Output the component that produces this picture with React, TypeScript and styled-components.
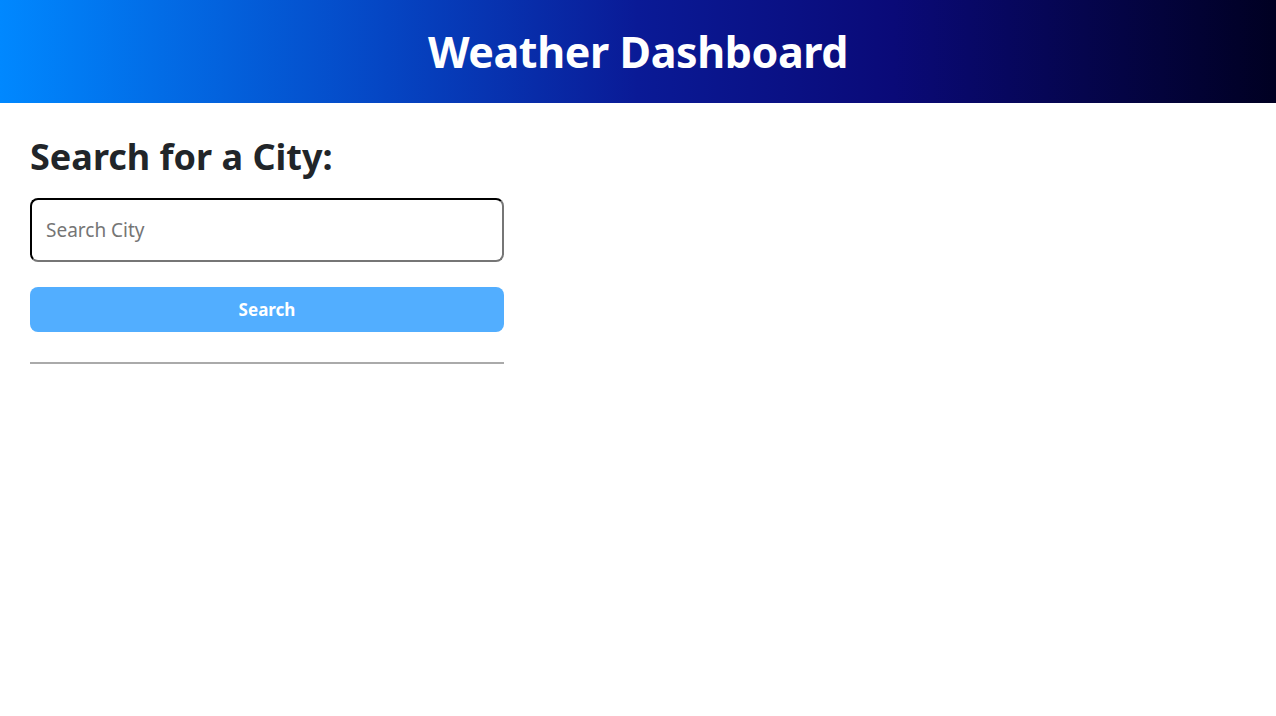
import React from "react";
import styled, { createGlobalStyle } from "styled-components";

const Global = createGlobalStyle`
  html, body { margin: 0; padding: 0; background: #fff; }
  body { font-family: "Noto Sans", "Open Sans", "DejaVu Sans", sans-serif; color: #212529; }
  * { box-sizing: border-box; }
`;

const Header = styled.header`
  height: 103px;
  display: flex;
  align-items: center;
  justify-content: center;
  background: linear-gradient(to right, #0088ff 0%, #0546c4 30%, #0a1a96 50%, #0a0a78 70%, #000022 100%);
`;

const Title = styled.h1`
  margin: 0;
  color: #fff;
  font-size: 43px;
  font-weight: 700;
  letter-spacing: -0.4px;
`;

const Main = styled.main`
  padding: 32px 30px 30px;
`;

const Sidebar = styled.section`
  width: 474px;
  display: flex;
  flex-direction: column;
`;

const Heading = styled.h2`
  margin: 0 0 20px;
  font-size: 36px;
  font-weight: 700;
  line-height: 1.2;
  color: #212529;
`;

const Input = styled.input`
  height: 64px;
  width: 100%;
  border: 2px inset #767676;
  border-top-color: #1f1f1f;
  border-left-color: #1f1f1f;
  border-right-color: #767676;
  border-bottom-color: #767676;
  border-radius: 8px;
  padding: 0 14px;
  font-family: inherit;
  font-size: 19px;
  color: #212529;
  outline: none;
  &::placeholder { color: #757575; }
`;

const Button = styled.button`
  margin-top: 25px;
  height: 45px;
  width: 100%;
  border: none;
  border-radius: 8px;
  background: #52aeff;
  color: #fff;
  font-family: inherit;
  font-size: 17px;
  font-weight: 700;
  cursor: pointer;
`;

const Divider = styled.hr`
  margin: 30px 0 0;
  border: none;
  border-top: 2px solid #aaaaaa;
  width: 100%;
`;

export default function App() {
  return (
    <>
      <Global />
      <Header>
        <Title>Weather Dashboard</Title>
      </Header>
      <Main>
        <Sidebar>
          <Heading>Search for a City:</Heading>
          <Input placeholder="Search City" />
          <Button>Search</Button>
          <Divider />
        </Sidebar>
      </Main>
    </>
  );
}
